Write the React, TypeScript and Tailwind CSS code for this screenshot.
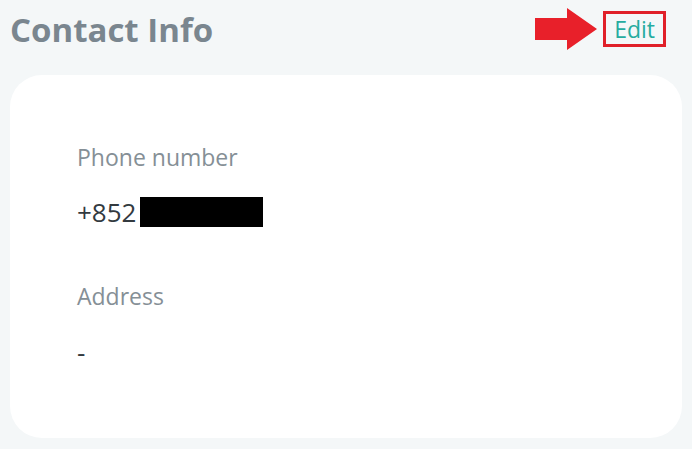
export default function App() {
  return (
    <div className="w-[692px] h-[449px] bg-[#f4f7f8] overflow-hidden" style={{ fontFamily: '"Open Sans", sans-serif' }}>
      <div className="flex items-center justify-between h-[58px] pl-[10px] pr-[26px]">
        <h1 className="text-[33px] font-bold text-[#7a868f] leading-none">Contact Info</h1>
        <div className="flex items-center gap-[6px]">
          <svg width="62" height="42" viewBox="0 0 62 42">
            <path d="M0 10 H32 V0 L62 21 L32 42 V32 H0 Z" fill="#e8202a" />
          </svg>
          <div className="border-[3px] border-[#e0202a] px-[8px] h-[36px] flex items-center">
            <span className="text-[23px] font-medium text-[#26aca0] leading-none">Edit</span>
          </div>
        </div>
      </div>
      <div className="mt-[17px] mx-[10px] h-[363px] bg-white rounded-[32px] pl-[67px] pt-[66px]">
        <div className="text-[23px] text-[#858f96] leading-[32px]">Phone number</div>
        <div className="mt-[23px] flex items-center gap-[4px] h-[32px]">
          <span className="text-[26px] text-[#333a3f]">+852</span>
          <span className="w-[123px] h-[30px] bg-black" />
        </div>
        <div className="mt-[52px] text-[23px] text-[#858f96] leading-[32px]">Address</div>
        <div className="mt-[24px] text-[26px] text-[#333a3f] leading-[32px]">-</div>
      </div>
    </div>
  );
}
